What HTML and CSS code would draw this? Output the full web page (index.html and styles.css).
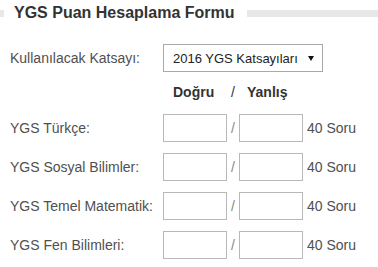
FILE: index.html
```html
<!DOCTYPE html>
<html lang="tr">
<head>
<meta charset="utf-8">
<title>YGS Puan Hesaplama Formu</title>
<link rel="stylesheet" href="styles.css">
</head>
<body>
<div class="page">
  <div class="head">
    <span class="bar bar-left"></span>
    <h1 class="title">YGS Puan Hesaplama Formu</h1>
    <span class="bar bar-right"></span>
  </div>
  <div class="form">
    <div class="sel-row">
      <label class="lbl">Kullanılacak Katsayı:</label>
      <div class="select"><span class="sel-text">2016 YGS Katsayıları</span><span class="arrow"></span></div>
    </div>
    <div class="grid cols">
      <span></span>
      <span class="c-d">Doğru</span>
      <span class="c-s">/</span>
      <span class="c-y">Yanlış</span>
      <span></span>
    </div>
    <div class="grid row">
      <label class="lbl">YGS Türkçe:</label>
      <input class="box" type="text">
      <span class="slash">/</span>
      <input class="box" type="text">
      <span class="total">40 Soru</span>
    </div>
    <div class="grid row">
      <label class="lbl">YGS Sosyal Bilimler:</label>
      <input class="box" type="text">
      <span class="slash">/</span>
      <input class="box" type="text">
      <span class="total">40 Soru</span>
    </div>
    <div class="grid row">
      <label class="lbl">YGS Temel Matematik:</label>
      <input class="box" type="text">
      <span class="slash">/</span>
      <input class="box" type="text">
      <span class="total">40 Soru</span>
    </div>
    <div class="grid row">
      <label class="lbl">YGS Fen Bilimleri:</label>
      <input class="box" type="text">
      <span class="slash">/</span>
      <input class="box" type="text">
      <span class="total">40 Soru</span>
    </div>
  </div>
</div>
</body>
</html>
```
FILE: styles.css
```css
html, body {
  margin: 0;
  padding: 0;
  background: #fff;
}
body {
  font-family: "Liberation Sans", Arial, sans-serif;
  color: #505050;
  font-size: 14px;
}
.page {
  width: 378px;
}
.head {
  display: flex;
  align-items: center;
  margin-top: 4px;
  height: 18px;
}
.bar {
  height: 7px;
  background: #e8e8e8;
}
.bar-left {
  width: 4px;
  margin-right: 10px;
}
.bar-right {
  flex: 1;
  margin-left: 12px;
}
.title {
  margin: 0;
  font-size: 16px;
  line-height: 18px;
  font-weight: bold;
  color: #333;
  white-space: nowrap;
}
.form {
  padding-left: 10px;
}
.sel-row {
  display: flex;
  align-items: center;
  margin-top: 22px;
}
.sel-row .lbl {
  width: 153px;
}
.lbl {
  line-height: 16px;
  white-space: nowrap;
}
.select {
  box-sizing: border-box;
  width: 160px;
  height: 28px;
  border: 1px solid #a9a9a9;
  display: flex;
  align-items: center;
  justify-content: space-between;
  padding: 0 8px 0 9px;
  font-size: 13px;
  color: #222;
}
.arrow {
  width: 0;
  height: 0;
  border-left: 3px solid transparent;
  border-right: 3px solid transparent;
  border-top: 5px solid #111;
}
.grid {
  display: grid;
  grid-template-columns: 153px 64px 12px 64px auto;
  align-items: center;
}
.cols {
  margin-top: 12px;
  line-height: 16px;
  font-weight: bold;
  color: #333;
}
.c-d {
  padding-left: 10px;
}
.c-s {
  font-weight: normal;
  padding-left: 4px;
  color: #333;
}
.c-y {
  padding-left: 8px;
}
.row {
  margin-top: 11px;
}
.cols + .row {
  margin-top: 14px;
}
.box {
  box-sizing: border-box;
  width: 64px;
  height: 28px;
  margin: 0;
  border: 1px solid #b8b8b8;
  border-radius: 0;
  background: #fff;
  padding: 0 4px;
  font: inherit;
}
.slash {
  text-align: center;
  color: #888;
}
.total {
  padding-left: 4px;
  white-space: nowrap;
}
```
